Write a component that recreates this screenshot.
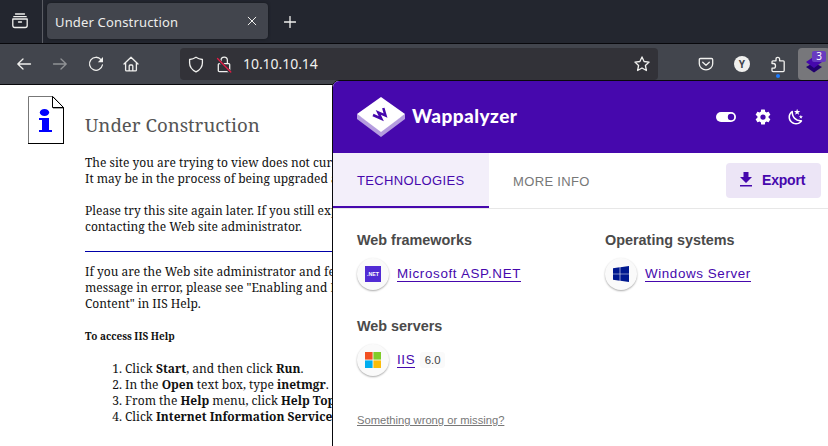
<div class="browser">
  <header class="tabs">
    <div class="library">
      <svg width="18" height="18" viewBox="0 0 18 18" class="ico"><path d="M4.500 2h9M2.800 4.700h12.400M1.800 7h14.400v6.500q0 2-2 2H3.800q-2 0-2-2zM7.500 10h3" /></svg>
    </div>
    <div class="tab">
      <span>Under Construction</span>
      <svg width="10" height="10" viewBox="0 0 10 10" class="ico thin"><path d="M1.200 1.200l7.600 7.600M8.800 1.200l-7.600 7.600" /></svg>
    </div>
    <svg width="12" height="12" viewBox="0 0 12 12" class="ico plus"><path d="M6 .5v11M.5 6h11" /></svg>
  </header>

  <nav class="bar">
    <svg class="ico b1" width="16" height="16" viewBox="0 0 16 16"><path d="M14.500 8H2M7 3L1.800 8 7 13" /></svg>
    <svg class="ico b2" width="16" height="16" viewBox="0 0 16 16"><path d="M1.500 8H14M9 3l5.200 5L9 13" /></svg>
    <svg class="ico b3" width="16" height="16" viewBox="0 0 16 16"><path d="M13 3.600A6.500 6.500 0 1 0 14.400 9" /><path class="fill" d="M15 1v5.200H9.800z" /></svg>
    <svg class="ico b4" width="16" height="16" viewBox="0 0 16 16"><path d="M1 8l7-6.700L15 8M2.600 6.800v7.100q0 1 1 1h8.800q1 0 1-1V6.800M6.200 14.800V10q0-1 1-1h1.600q1 0 1 1v4.800" /></svg>
    <div class="url">
      <svg class="ico" width="16" height="17" viewBox="0 0 16 17"><path d="M8 1.200c1.800 1.200 4 2 6.400 2.300v3.400c0 4-2.300 6.800-6.400 8.900-4.100-2.100-6.400-4.900-6.400-8.900V3.500C4 3.200 6.200 2.400 8 1.200z" /></svg>
      <svg class="ico lock" width="16" height="17" viewBox="0 0 16 17"><path d="M5 7.500V4.500q0-3.300 3.200-3.300t3.200 3.300v3M3.300 7.600h9.400q1 0 1 1v5.800q0 1.200-1.200 1.200H3.500q-1.200 0-1.200-1.200V8.600q0-1 1-1z" /><path class="gap" d="M1.500 3l13 13.300" /><path class="slash" d="M1.500 2.500l13.300 13.500" /></svg>
      <span>10.10.10.14</span>
      <svg class="ico star" width="16" height="16" viewBox="0 0 16 16"><path d="M8 .9l2.100 4.600 5 .6-3.700 3.400 1 5L8 12l-4.400 2.500 1-5L.9 6.100l5-.6z" /></svg>
    </div>
    <svg class="ico pocket" width="16" height="14" viewBox="0 0 16 14"><path d="M2.500 1.500h11q1.200 0 1.200 1.200v4a6.700 6.100 0 0 1-13.400 0v-4q0-1.200 1.200-1.200zM4.700 5.200L8 8.300l3.300-3.100" /></svg>
    <div class="avatar">Y</div>
    <div class="puzzle">
      <svg class="ico" width="16" height="17" viewBox="0 0 16 17"><path d="M2 7.500V5.800q0-1 1-1h3V3.200q0-1.900 1.800-1.900t1.800 1.900v1.600h3.600q1 0 1 1v8.800q0 1-1 1H3q-1 0-1-1v-2.400h1.500q2 0 2-2.300t-2-2.400z" /></svg>
      <i></i>
    </div>
    <div class="ext">
      <svg width="16" height="17" viewBox="0 0 16 17"><path fill="#22006f" d="M0 11l8-4.500 8 4.500-8 5.500z" /><path fill="#4608ad" d="M0 6l8-5.500L16 6l-8 6z" /></svg>
      <b>3</b>
    </div>
  </nav>

  <main>
    <svg class="info" width="37" height="48" viewBox="0 0 37 48">
      <path fill="#fff" stroke="#777" d="M.5 47V.5H25l10.500 11V47" />
      <path fill="none" stroke="#000" d="M24.500 .5l11 11H24.500zM35.500 11.500V47.500M0 47.500H36" />
      <path fill="none" stroke="#aaa" d="M25 12.500h10" />
      <ellipse cx="16.500" cy="16.500" rx="4.700" ry="3.500" fill="#00f" />
      <path fill="#00f" d="M11 22h10v12h3v2H11v-2h3v-10h-3z" />
    </svg>
    <article>
      <h1>Under Construction</h1>
      <p class="p1">The site you are trying to view does not cur<br />It may be in the process of being upgraded a</p>
      <p class="p2">Please try this site again later. If you still exp<br />contacting the Web site administrator.</p>
      <hr />
      <p class="p3">If you are the Web site administrator and fe<br />message in error, please see "Enabling and D<br />Content" in IIS Help.</p>
      <h2>To access IIS Help</h2>
      <ol>
        <li>Click <b>Start</b>, and then click <b>Run</b>.</li>
        <li>In the <b>Open</b> text box, type <b>inetmgr</b>.</li>
        <li>From the <b>Help</b> menu, click <b>Help Top</b></li>
        <li>Click <b>Internet Information Service</b></li>
      </ol>
    </article>
  </main>

  <aside>
    <div class="head">
      <svg width="48" height="42" viewBox="0 0 48 42">
        <path fill="#b59ddf" d="M0 18l24 16 24-16v5L24 41 0 23z" />
        <path fill="#fff" d="M24 1l24 17-24 18L0 18z" />
        <path fill="none" stroke="#4608ad" stroke-width="2.500" d="M16 19l8.300 3.700-3-6.300 7.200 3.200-2.200-7.600" />
      </svg>
      <strong>Wappalyzer</strong>
      <div class="tools">
        <svg width="20" height="10" viewBox="0 0 20 10"><rect width="20" height="10" rx="5" fill="#fff" /><circle cx="15" cy="5" r="3.200" fill="#4608ad" /></svg>
        <svg width="18" height="18" viewBox="0 0 24 24" fill="#fff"><path d="M12 15.500A3.500 3.500 0 0 1 8.500 12 3.500 3.500 0 0 1 12 8.500a3.500 3.500 0 0 1 3.500 3.500 3.500 3.500 0 0 1-3.500 3.500m7.430-2.530c.04-.32.07-.64.07-.97s-.03-.66-.07-1l2.110-1.630c.19-.15.24-.42.12-.64l-2-3.460c-.12-.22-.39-.31-.61-.22l-2.490 1c-.52-.39-1.060-.73-1.690-.98l-.37-2.650A.506.506 0 0 0 14 2h-4c-.25 0-.46.18-.5.42l-.37 2.650c-.63.25-1.170.59-1.690.98l-2.490-1c-.22-.09-.49 0-.61.22l-2 3.460c-.13.22-.07.49.12.64L4.570 11c-.04.34-.07.67-.07 1s.03.65.07.97l-2.110 1.660c-.19.15-.25.42-.12.64l2 3.460c.12.22.39.3.61.22l2.490-1.010c.52.4 1.060.74 1.690.99l.37 2.650c.04.24.25.42.5.42h4c.25 0 .46-.18.5-.42l.37-2.650c.63-.26 1.170-.59 1.690-.99l2.490 1.010c.22.08.49 0 .61-.22l2-3.460c.12-.22.07-.49-.12-.64z" /></svg>
        <svg width="18" height="18" viewBox="0 0 24 24" fill="#fff"><path d="M17.750 4.090l-2.530 1.940.91 3.060-2.630-1.810-2.630 1.810.91-3.060-2.530-1.940L12.440 4l1.060-3 1.060 3zM21.250 11l-1.640 1.250.59 1.980-1.700-1.170-1.700 1.170.59-1.980L15.750 11l2.060-.05L18.500 9l.69 1.950zM18.970 15.950c.83-.08 1.720 1.100 1.190 1.850-.32.45-.66.870-1.080 1.270C15.170 23 8.840 23 4.940 19.070c-3.910-3.900-3.910-10.240 0-14.140.4-.4.820-.76 1.270-1.080.75-.53 1.930.36 1.850 1.190-.27 2.860.69 5.830 2.890 8.020a9.960 9.960 0 0 0 8.020 2.890m-1.640 2.020a12.080 12.080 0 0 1-7.800-3.470c-2.170-2.190-3.330-5-3.490-7.820-2.810 3.140-2.700 7.960.31 10.980 3.020 3.010 7.840 3.120 10.980.31z" /></svg>
      </div>
    </div>
    <div class="nav">
      <div class="on">TECHNOLOGIES</div>
      <div class="more">MORE INFO</div>
      <button><svg width="12" height="15" viewBox="0 0 12 15" fill="#4608ad"><path d="M3.500 0h5v5H12L6 11 0 5h3.500zM0 13h12v1.500H0z" /></svg>Export</button>
    </div>
    <div class="cols">
      <section>
        <h3>Web frameworks</h3>
        <div class="row"><span class="disc"><svg width="16" height="16"><rect width="16" height="16" fill="#512bd4" /><text x="2" y="10.200" textLength="12" lengthAdjust="spacingAndGlyphs" fill="#fff" font-size="5.500" font-weight="700">.NET</text></svg></span><u class="asp">Microsoft ASP.NET</u></div>
        <h3 class="second">Web servers</h3>
        <div class="row"><span class="disc"><svg width="16" height="16"><path fill="#f25022" d="M0 0h7.600v7.600H0z" /><path fill="#80cc28" d="M8.400 0H16v7.600H8.400z" /><path fill="#00adef" d="M0 8.400h7.600V16H0z" /><path fill="#fbbc09" d="M8.400 8.400H16V16H8.400z" /></svg></span><u>IIS</u><em>6.0</em></div>
      </section>
      <section>
        <h3>Operating systems</h3>
        <div class="row"><span class="disc"><svg width="16" height="16" fill="#00188f"><path d="M0 2.300l6.700-1v6.400H0zM7.300 1.200L16 0v7.700H7.300zM0 8.300h6.700v6.400L0 13.700zM7.300 8.300H16V16l-8.700-1.200z" /></svg></span><u>Windows Server</u></div>
      </section>
    </div>
    <div class="wrong">Something wrong or missing?</div>
  </aside>
</div>

<style>
  :global(body) { margin: 0; overflow: hidden; }
  * { box-sizing: border-box; }
  svg { display: block; flex: none; }
  .browser { position: relative; width: 828px; height: 446px; overflow: hidden; background: #fff; font-family: "Noto Sans", sans-serif; }
  .ico { fill: none; stroke: #f0f0ee; stroke-width: 1.3; stroke-linecap: round; stroke-linejoin: round; }
  .thin { stroke-width: 1; }
  .fill { fill: #f0f0ee; stroke: none; }
  .tabs { height: 44px; display: flex; align-items: center; background: #23262f; border-bottom: 1px solid #08080c; }
  .library { width: 43px; height: 43px; border-right: 1px solid #5b5d64; padding: 12px 0 0 11px; }
  .tab { width: 221px; height: 36px; margin: -1px 0 0 4px; padding: 0 11px 0 8px; border-radius: 4px; background: #42454d; display: flex; align-items: center; justify-content: space-between; color: #ededeb; font-size: 13px; letter-spacing: .16px; box-shadow: 0 0 3px #15171c; }
  .tab span { padding-top: 2px; white-space: nowrap; }
  .plus { margin-left: 16px; }
  .bar { height: 41px; display: flex; align-items: center; background: #42454d; border-bottom: 1px solid #08080c; padding-left: 16px; }
  .b2 { margin-left: 20px; opacity: .45; }
  .b3 { margin-left: 20px; }
  .b4 { margin-left: 19px; }
  .url { flex: none; width: 478px; height: 32px; margin-left: 41px; border-radius: 4px; background: #323238; display: flex; align-items: center; padding: 0 8px; color: #f0f0ee; font-size: 14px; }
  .lock { margin-left: 12px; }
  .gap { stroke: #323238; stroke-width: 3; }
  .slash { stroke: #e51c46; stroke-width: 1.3; }
  .url span { margin-left: 11px; letter-spacing: -.05px; padding-bottom: 2px; }
  .star { margin-left: auto; }
  .pocket { margin-left: 40px; }
  .avatar { flex: none; width: 16px; height: 16px; margin-left: 20px; border-radius: 50%; background: #f0f0ee; color: #42454d; font: 700 10px/16px "Noto Sans", sans-serif; text-align: center; }
  .puzzle { position: relative; margin-left: 20px; }
  .puzzle i { position: absolute; left: 6px; top: 18px; width: 4px; height: 4px; border-radius: 2px; background: #1c7cff; }
  .ext { position: relative; width: 32px; height: 32px; margin-left: 12px; flex: none; border-radius: 4px; background: #77777b; padding: 8px; }
  .ext b { position: absolute; left: 14px; top: 3px; width: 14px; height: 11px; border-radius: 2px; background: #683bc0; color: #fff; font: 10px/11px "Noto Sans", sans-serif; text-align: center; }
  main { display: flex; padding-left: 28px; height: 361px; color: #111; }
  .info { margin-top: 11px; }
  article { margin-left: 20px; width: 260px; flex: none; font: 12px/16px "Noto Serif", "DejaVu Serif Condensed", "DejaVu Serif", serif; white-space: nowrap; }
  h1 { margin: 27px 0 0; font-size: 18.65px; line-height: 26px; font-weight: 400; color: #555; }
  p { margin: 0; }
  .p1 { margin-top: 17px; }
  .p2 { margin-top: 16px; }
  hr { margin: 16px 0 0; border: 0; height: 1px; background: #0000a8; }
  .p3 { margin-top: 12px; }
  h2 { margin: 16px 0 0; font-size: 10px; line-height: 16px; }
  ol { margin: 17px 0 0; padding-left: 40px; }
  aside { position: absolute; left: 332px; top: 80px; width: 504px; height: 380px; border: 1px solid #08080c; border-radius: 7px; overflow: hidden; background: #fff; font-family: "Liberation Sans", Arial, sans-serif; }
  .head { height: 72px; background: #4608ad; display: flex; align-items: center; padding-left: 24px; }
  .head strong { color: #fff; font: 900 19px/24px Lato, sans-serif; letter-spacing: .45px; margin: -3px 0 0 7px; width: 106px; white-space: nowrap; }
  .tools { display: flex; align-items: center; margin-left: 198px; }
  .tools svg + svg { margin-left: 18px; }
  .tools svg:last-child { margin-left: 15px; }
  .nav { height: 56px; display: flex; border-bottom: 1px solid #e7e7e7; font-size: 13px; color: #777; letter-spacing: .35px; }
  .on { width: 156px; height: 55px; padding-left: 24px; line-height: 55px; color: #4608ad; background: #f3effa; border-bottom: 2px solid #4608ad; }
  .more { padding-left: 24px; line-height: 57px; width: 237px; letter-spacing: .35px; }
  button { width: 95px; height: 35px; margin: 10px 0 0; border: 0; border-radius: 4px; background: #ece5f6; color: #4608ad; font: 700 14px "Liberation Sans", Arial, sans-serif; letter-spacing: -.2px; padding: 0 0 2px 14px; display: flex; align-items: center; gap: 10px; }
  .cols { display: flex; padding: 22px 0 0 24px; }
  section { width: 248px; flex: none; }
  h3 { margin: 0; font-size: 14.4px; line-height: 18px; letter-spacing: 0; color: #4a4a4a; }
  .second { margin-top: 27px; }
  .row { display: flex; align-items: center; margin-top: 9px; height: 32px; }
  .disc { width: 32px; height: 32px; border-radius: 50%; background: #fafafa; box-shadow: 0 1px 2px #0005; padding: 8px; margin-right: 8px; }
  u { color: #4608ad; font-size: 13.4px; line-height: 15px; letter-spacing: .6px; text-decoration: none; border-bottom: 1px solid #4608ad; margin-top: -1px; white-space: nowrap; }
  .asp { letter-spacing: .66px; }
  em { margin-left: 5px; width: 25px; height: 16px; border-radius: 3px; background: #fafafa; color: #444; font-style: normal; font-size: 11.4px; line-height: 16px; text-align: center; margin-top: -1px; }
  .wrong { margin: 38px 0 0 24px; width: fit-content; color: #777; font-size: 11.2px; line-height: 13px; text-decoration: underline; }
</style>
